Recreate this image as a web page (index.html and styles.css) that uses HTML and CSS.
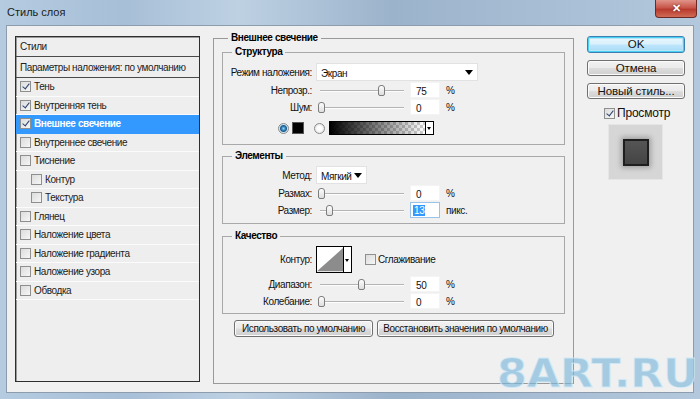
FILE: index.html
```html
<!DOCTYPE html>
<html lang="ru">
  <head>
    <meta charset="UTF-8" />
    <title>Стиль слоя</title>
    <link rel="stylesheet" href="styles.css">
  </head>

  <body>
    <div class="window">
      <div class="titlebar">
        <span class="title">Стиль слоя</span>
        <span class="close">&#x2715;</span>
      </div>

      <div class="client">
        <ul class="styles-list">
          <li class="head">Стили</li>
          <li class="head">Параметры наложения: по умолчанию</li>
          <li><span class="cb on"></span>Тень</li>
          <li><span class="cb on"></span>Внутренняя тень</li>
          <li class="selected"><span class="cb on"></span>Внешнее свечение</li>
          <li><span class="cb"></span>Внутреннее свечение</li>
          <li><span class="cb"></span>Тиснение</li>
          <li class="sub"><span class="cb"></span>Контур</li>
          <li class="sub"><span class="cb"></span>Текстура</li>
          <li><span class="cb"></span>Глянец</li>
          <li><span class="cb"></span>Наложение цвета</li>
          <li><span class="cb"></span>Наложение градиента</li>
          <li><span class="cb"></span>Наложение узора</li>
          <li><span class="cb"></span>Обводка</li>
        </ul>

        <fieldset class="group main">
          <legend>Внешнее свечение</legend>

          <fieldset class="group structure">
            <legend>Структура</legend>
            <div class="row">
              <label class="lbl">Режим наложения:</label>
              <div class="select wide">Экран<span class="arrow"></span></div>
            </div>
            <div class="row slim">
              <label class="lbl">Непрозр.:</label>
              <div class="slider"><span class="thumb" style="--pos: 75%"></span></div>
              <span class="field">75</span>
              <span class="unit">%</span>
            </div>
            <div class="row slim">
              <label class="lbl">Шум:</label>
              <div class="slider"><span class="thumb" style="--pos: 0%"></span></div>
              <span class="field">0</span>
              <span class="unit">%</span>
            </div>
            <div class="row colors">
              <span class="radio on"></span>
              <span class="swatch"></span>
              <span class="radio"></span>
              <div class="gradient"><span class="grad-fill"></span><span class="drop"></span></div>
            </div>
          </fieldset>

          <fieldset class="group elements">
            <legend>Элементы</legend>
            <div class="row">
              <label class="lbl">Метод:</label>
              <div class="select short">Мягкий<span class="arrow"></span></div>
            </div>
            <div class="row slim">
              <label class="lbl">Размах:</label>
              <div class="slider"><span class="thumb" style="--pos: 0%"></span></div>
              <span class="field">0</span>
              <span class="unit">%</span>
            </div>
            <div class="row slim">
              <label class="lbl">Размер:</label>
              <div class="slider"><span class="thumb" style="--pos: 10%"></span></div>
              <span class="field focus"><span class="sel">13</span></span>
              <span class="unit">пикс.</span>
            </div>
          </fieldset>

          <fieldset class="group quality">
            <legend>Качество</legend>
            <div class="row contour-row">
              <label class="lbl">Контур:</label>
              <div class="contour">
                <svg width="28" height="25" viewBox="0 0 28 25">
                  <polygon points="0,25 28,0 28,25" fill="#8c8c8c" />
                </svg>
                <span class="drop"></span>
              </div>
              <span class="cb"></span>
              <span class="check-text">Сглаживание</span>
            </div>
            <div class="row slim gap">
              <label class="lbl">Диапазон:</label>
              <div class="slider"><span class="thumb" style="--pos: 50%"></span></div>
              <span class="field">50</span>
              <span class="unit">%</span>
            </div>
            <div class="row slim">
              <label class="lbl">Колебание:</label>
              <div class="slider"><span class="thumb" style="--pos: 0%"></span></div>
              <span class="field">0</span>
              <span class="unit">%</span>
            </div>
          </fieldset>

          <div class="defaults">
            <button class="btn small" type="button">Использовать по умолчанию</button>
            <button class="btn small" type="button">Восстановить значения по умолчанию</button>
          </div>
        </fieldset>

        <div class="side">
          <button class="btn big default" type="button">OK</button>
          <button class="btn big" type="button">Отмена</button>
          <button class="btn big" type="button">Новый стиль...</button>
          <div class="preview-check"><span class="cb on"></span>Просмотр</div>
          <div class="preview"><span class="preview-box"></span></div>
        </div>
      </div>

      <div class="watermark">8ART.RU</div>
    </div>
  </body>
</html>
```

FILE: styles.css
```css
* {
  box-sizing: border-box;
  margin: 0;
  padding: 0;
}

html,
body {
  width: 700px;
  height: 399px;
  overflow: hidden;
  font-family: "Liberation Sans", Arial, sans-serif;
  font-size: 10px;
  letter-spacing: -0.4px;
  color: #111;
}

.window {
  position: relative;
  display: flex;
  flex-direction: column;
  width: 700px;
  height: 399px;
  padding: 0 6px 6px 6px;
  background: linear-gradient(to right, #b4cbe0 0%, #a7bfd7 18%, #bed1e3 34%, #9bb3cb 56%, #a6bdd4 76%, #b3c8dc 100%);
}

.titlebar {
  display: flex;
  align-items: flex-start;
  justify-content: space-between;
  height: 25px;
}

.title {
  margin: 6px 0 0 1px;
  font-size: 11px;
  letter-spacing: 0;
  color: #1b1b1b;
}

.close {
  width: 42px;
  height: 18px;
  margin-right: -3px;
  border: 1px solid #6b2a25;
  border-top: none;
  border-radius: 0 0 4px 4px;
  background: linear-gradient(#e0948a, #c9564a 45%, #b83a2e 55%, #d06a55);
  color: #fff;
  font-size: 11px;
  font-weight: bold;
  text-align: center;
  line-height: 16px;
  text-shadow: 0 0 2px #5a1a12;
}

.client {
  flex: 1;
  display: flex;
  align-items: flex-start;
  padding: 6px 0 0 8px;
  background: #f0f0f0;
  border: 1px solid #8d9dae;
}

/* left list */

.styles-list {
  list-style: none;
  width: 185px;
  height: 346px;
  margin-top: 4px;
  background: #eeeeee;
  border: 1px solid #2e2e2e;
  box-shadow: inset 1px 1px 0 #9a9a9a;
  color: #222;
}

.styles-list li {
  display: flex;
  align-items: center;
  height: 18.5px;
  padding-left: 4px;
  white-space: nowrap;
  border-bottom: 1px solid #fbfbfb;
}

.styles-list li.head {
  height: 20px;
  border-bottom: 1px solid #4a4a4a;
}

.styles-list li.head + li.head {
  height: 21px;
}

.styles-list li.sub {
  padding-left: 15px;
}

.styles-list li.selected {
  background: #3399ff;
  color: #fff;
  font-weight: bold;
  border-bottom-color: #3399ff;
}

.cb {
  position: relative;
  display: inline-block;
  flex: none;
  width: 11px;
  height: 11px;
  margin-right: 3px;
  border: 1px solid #8e8f8f;
  background: linear-gradient(135deg, #dcdcdc, #f6f6f6);
}

.cb.on::after {
  content: "";
  position: absolute;
  left: 3px;
  top: 0px;
  width: 3px;
  height: 6px;
  border: solid #2b4470;
  border-width: 0 1.5px 1.5px 0;
  transform: rotate(38deg);
}

/* group boxes */

.group {
  min-width: 0;
  border: 1px solid #a9a9a9;
}

.group legend {
  margin-left: 9px;
  padding: 0 3px;
  line-height: 12px;
  font-weight: bold;
  color: #000;
}

.main {
  width: 361px;
  height: 352px;
  margin-left: 13px;
  padding: 2px 8px 0 8px;
  border-color: #999;
}

.main > legend {
  margin-left: 6px;
}

.structure {
  padding: 5px 0 9px 0;
}

.elements {
  margin-top: 5px;
  padding: 4px 0 5px 0;
}

.quality {
  margin-top: 6px;
  padding: 4px 0 4px 0;
}

.row {
  display: flex;
  align-items: center;
  height: 18px;
  white-space: nowrap;
}

.row.slim {
  height: 16px;
  margin-top: 1px;
}

.row.gap {
  margin-top: 3px;
}

.lbl {
  flex: none;
  width: 89px;
  margin-right: 4px;
  text-align: right;
}

.select {
  position: relative;
  height: 18px;
  padding: 4px 0 0 4px;
  background: #fff;
  border: 1px solid #e2e2e2;
}

.select.wide {
  width: 162px;
}

.select.short {
  width: 51px;
}

.select .arrow {
  position: absolute;
  right: 4px;
  top: 6px;
  border: 4px solid transparent;
  border-top: 5px solid #000;
  border-bottom: none;
}

.slider {
  position: relative;
  width: 88px;
  height: 16px;
  margin-left: 2px;
}

.slider::before {
  content: "";
  position: absolute;
  left: 2px;
  right: 2px;
  top: 8px;
  height: 1px;
  background: #b4b4b4;
  border-bottom: 1px solid #fdfdfd;
}

.slider .thumb {
  position: absolute;
  left: calc(var(--pos) * 0.91);
  top: 3px;
  width: 7px;
  height: 11px;
  border: 1px solid #7d7d7d;
  border-radius: 3px 3px 2px 2px;
  background: linear-gradient(#fdfdfd, #dedede);
}

.field {
  width: 30px;
  height: 16px;
  margin-left: 4px;
  padding: 3px 0 0 5px;
  background: #fff;
  border: 1px solid #f4f4f4;
}

.field.focus {
  border-color: #9ac3ea;
  padding: 2px 0 0 2px;
}

.field .sel {
  display: inline-block;
  padding: 0 1px;
  background: #3399ff;
  color: #fff;
  line-height: 11px;
}

.unit {
  margin-left: 6px;
}

.colors {
  height: 14px;
  margin-top: 6px;
  padding-left: 55px;
}

.radio {
  width: 11px;
  height: 11px;
  border: 1px solid #8a8a8a;
  border-radius: 50%;
  background: radial-gradient(circle, #fff 30%, #d8d8d8);
}

.radio.on {
  background: radial-gradient(circle, #9fd4f2 0, #2d7fb6 2px, #1c5b8d 3px, #cfe4f1 4px, #eef3f7);
}

.swatch {
  width: 12px;
  height: 12px;
  margin: 0 10px 0 3px;
  background: #000;
  border: 1px solid #555;
}

.gradient {
  display: flex;
  width: 105px;
  height: 14px;
  margin-left: 4px;
  border: 1px solid #000;
}

.grad-fill {
  flex: 1;
  background:
    linear-gradient(to right, #000, rgba(0, 0, 0, 0)),
    repeating-conic-gradient(#cfcfcf 0 25%, #fff 0 50%) 0 0 / 6px 6px;
}

.drop {
  position: relative;
  width: 8px;
  background: #fff;
  border-left: 1px solid #000;
}

.drop::after {
  content: "";
  position: absolute;
  left: 1px;
  top: 50%;
  margin-top: -1px;
  border: 2px solid transparent;
  border-top: 3px solid #000;
  border-bottom: none;
}

.contour-row {
  height: 27px;
}

.contour {
  display: flex;
  height: 27px;
  width: 36px;
  border: 1px solid #000;
  background: #fff;
}

.contour svg {
  display: block;
}

.contour-row .cb {
  margin-left: 13px;
  margin-right: 0;
}

.check-text {
  margin-left: 2px;
}

.defaults {
  display: flex;
  gap: 4px;
  margin: 6px 0 0 12px;
}

/* buttons */

.btn {
  height: 17px;
  padding: 0;
  border: 1px solid #707070;
  border-radius: 3px;
  background: linear-gradient(#f2f2f2 0%, #ebebeb 48%, #dddddd 52%, #cfcfcf 100%);
  box-shadow: inset 0 0 0 1px #fbfbfb;
  font-family: inherit;
  letter-spacing: inherit;
  white-space: nowrap;
  color: #111;
}

.btn.small {
  font-size: 10px;
}

.defaults .btn:first-child {
  width: 139px;
}

.defaults .btn:last-child {
  width: 177px;
}

.side {
  display: flex;
  flex-direction: column;
  width: 98px;
  margin: 4px 0 0 13px;
}

.btn.big {
  width: 98px;
  height: 16px;
  font-size: 11.5px;
  letter-spacing: -0.1px;
  line-height: 13px;
}

.btn.big + .btn.big {
  margin-top: 7px;
}

.btn.default {
  height: 17px;
  border-color: #3c7fb1;
  box-shadow: inset 0 0 0 1px #48d0f5, inset 0 0 0 2px #b8e6f7;
  background: linear-gradient(#eaf6fd 0%, #d9f0fc 48%, #bee6fd 52%, #a7d9f5 100%);
}

.preview-check {
  display: flex;
  align-items: center;
  margin: 7px 0 0 17px;
  font-size: 12px;
  letter-spacing: -0.2px;
}

.preview-check .cb {
  margin-right: 2px;
}

.preview {
  display: flex;
  align-items: center;
  justify-content: center;
  width: 55px;
  height: 56px;
  margin: 4px 0 0 21px;
  background: #d6d6d6;
  border: 1px solid #e6e6e6;
}

.preview-box {
  width: 26px;
  height: 27px;
  background: linear-gradient(#555, #444);
  border: 2px solid #1e1e1e;
  box-shadow: 0 0 5px 2px rgba(0, 0, 0, 0.25);
}

/* site watermark over the frame */

.watermark {
  position: absolute;
  left: 497px;
  top: 354px;
  font-family: "DejaVu Sans", sans-serif;
  font-size: 39px;
  line-height: 39px;
  font-weight: bold;
  letter-spacing: 0;
  color: rgba(120, 182, 218, 0.65);
  -webkit-text-stroke: 1px rgba(210, 235, 248, 0.8);
  transform: scaleX(1.1);
  transform-origin: left top;
}
```
